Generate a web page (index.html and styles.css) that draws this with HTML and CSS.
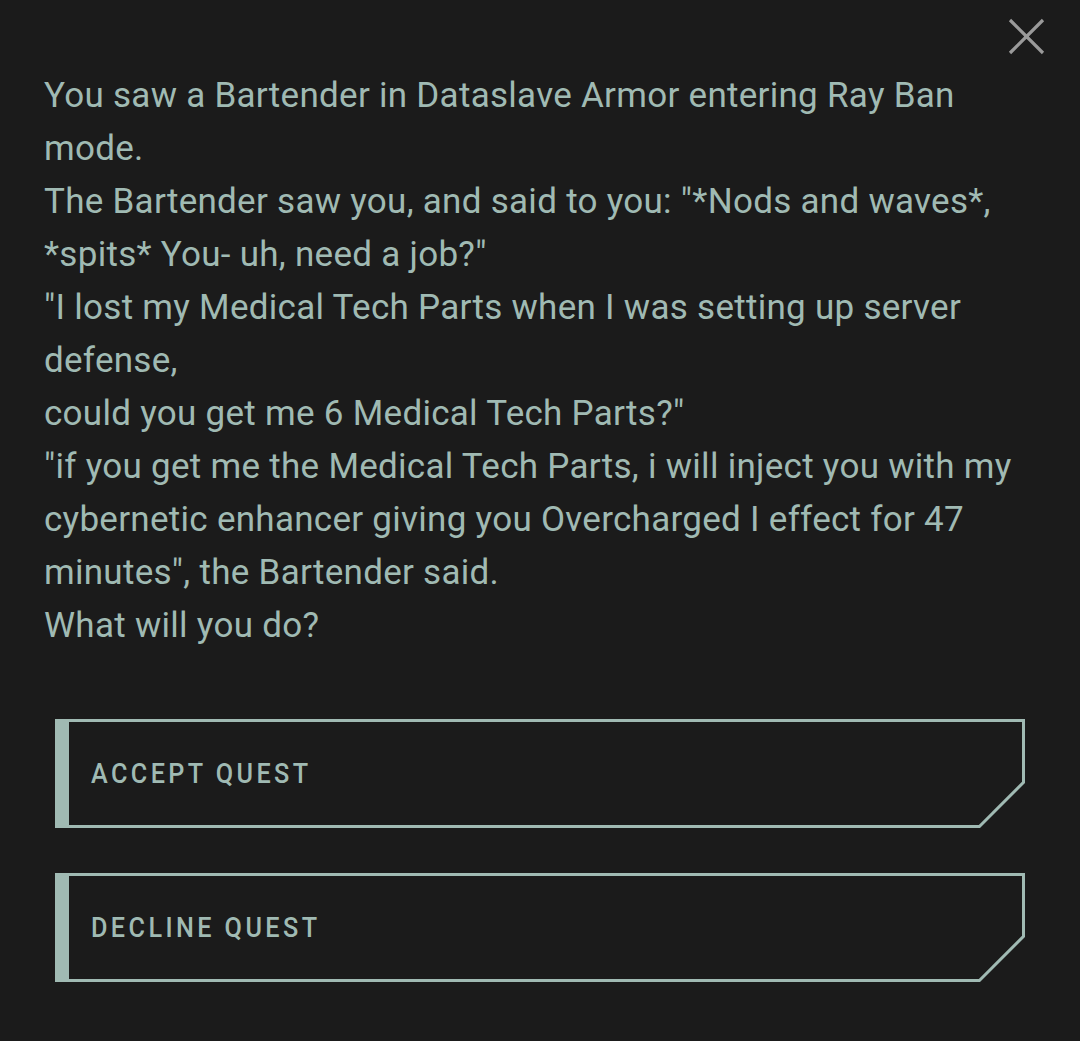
FILE: index.html
```html
<!DOCTYPE html>
<html>
<head>
<meta charset="utf-8">
<link rel="stylesheet" href="styles.css">
</head>
<body>
<div class="dialog">
  <button class="close" aria-label="Close">
    <svg width="37" height="37" viewBox="0 0 37 37"><path d="M2 2 L35 35 M35 2 L2 35" stroke="#9a9a9a" stroke-width="3.2" fill="none"/></svg>
  </button>
  <p class="story">You saw a Bartender in Dataslave Armor entering Ray Ban mode.<br>The Bartender saw you, and said to you: "*Nods and waves*, *spits* You- uh, need a job?"<br>"I lost my Medical Tech Parts when I was setting up server defense,<br>could you get me 6 Medical Tech Parts?"<br>"if you get me the Medical Tech Parts, i will inject you with my cybernetic enhancer giving you Overcharged I effect for 47 minutes", the Bartender said.<br>What will you do?</p>
  <div class="choices">
    <div class="choice"><div class="choice-inner"><span class="label">ACCEPT QUEST</span></div></div>
    <div class="choice"><div class="choice-inner"><span class="label">DECLINE QUEST</span></div></div>
  </div>
</div>
</body>
</html>
```

FILE: styles.css
```css
html, body {
  margin: 0;
  padding: 0;
  background: #1b1b1b;
}
body {
  width: 1080px;
  height: 1041px;
  overflow: hidden;
  font-family: Roboto, "Liberation Sans", sans-serif;
}
.dialog {
  position: relative;
  padding: 69px 45px 0 44px;
}
.close {
  position: absolute;
  top: 18px;
  right: 35px;
  background: none;
  border: 0;
  padding: 0;
  width: 37px;
  height: 37px;
  cursor: pointer;
}
.close svg { display: block; }
.story {
  margin: 0;
  color: #a0bab3;
  font-size: 35px;
  letter-spacing: 0.28px;
  line-height: 53px;
  width: 991px;
}
.choices {
  display: flex;
  flex-direction: column;
  gap: 45px;
  margin: 67px 10px 0 11px;
}
.choice {
  background: #a0bab3;
  height: 109px;
  box-sizing: border-box;
  padding: 3px 3px 3px 14px;
  clip-path: polygon(0 0, 100% 0, 100% calc(100% - 45px), calc(100% - 45px) 100%, 0 100%);
}
.choice-inner {
  height: 100%;
  background: #1b1b1b;
  clip-path: polygon(0 0, 100% 0, 100% calc(100% - 43.2px), calc(100% - 43.2px) 100%, 0 100%);
  display: flex;
  align-items: center;
  padding-left: 22px;
}
.label {
  display: inline-block;
  color: #a0bab3;
  font-size: 28px;
  font-weight: 500;
  letter-spacing: 3.8px;
  transform: scaleX(0.9);
  transform-origin: left center;
}
```
